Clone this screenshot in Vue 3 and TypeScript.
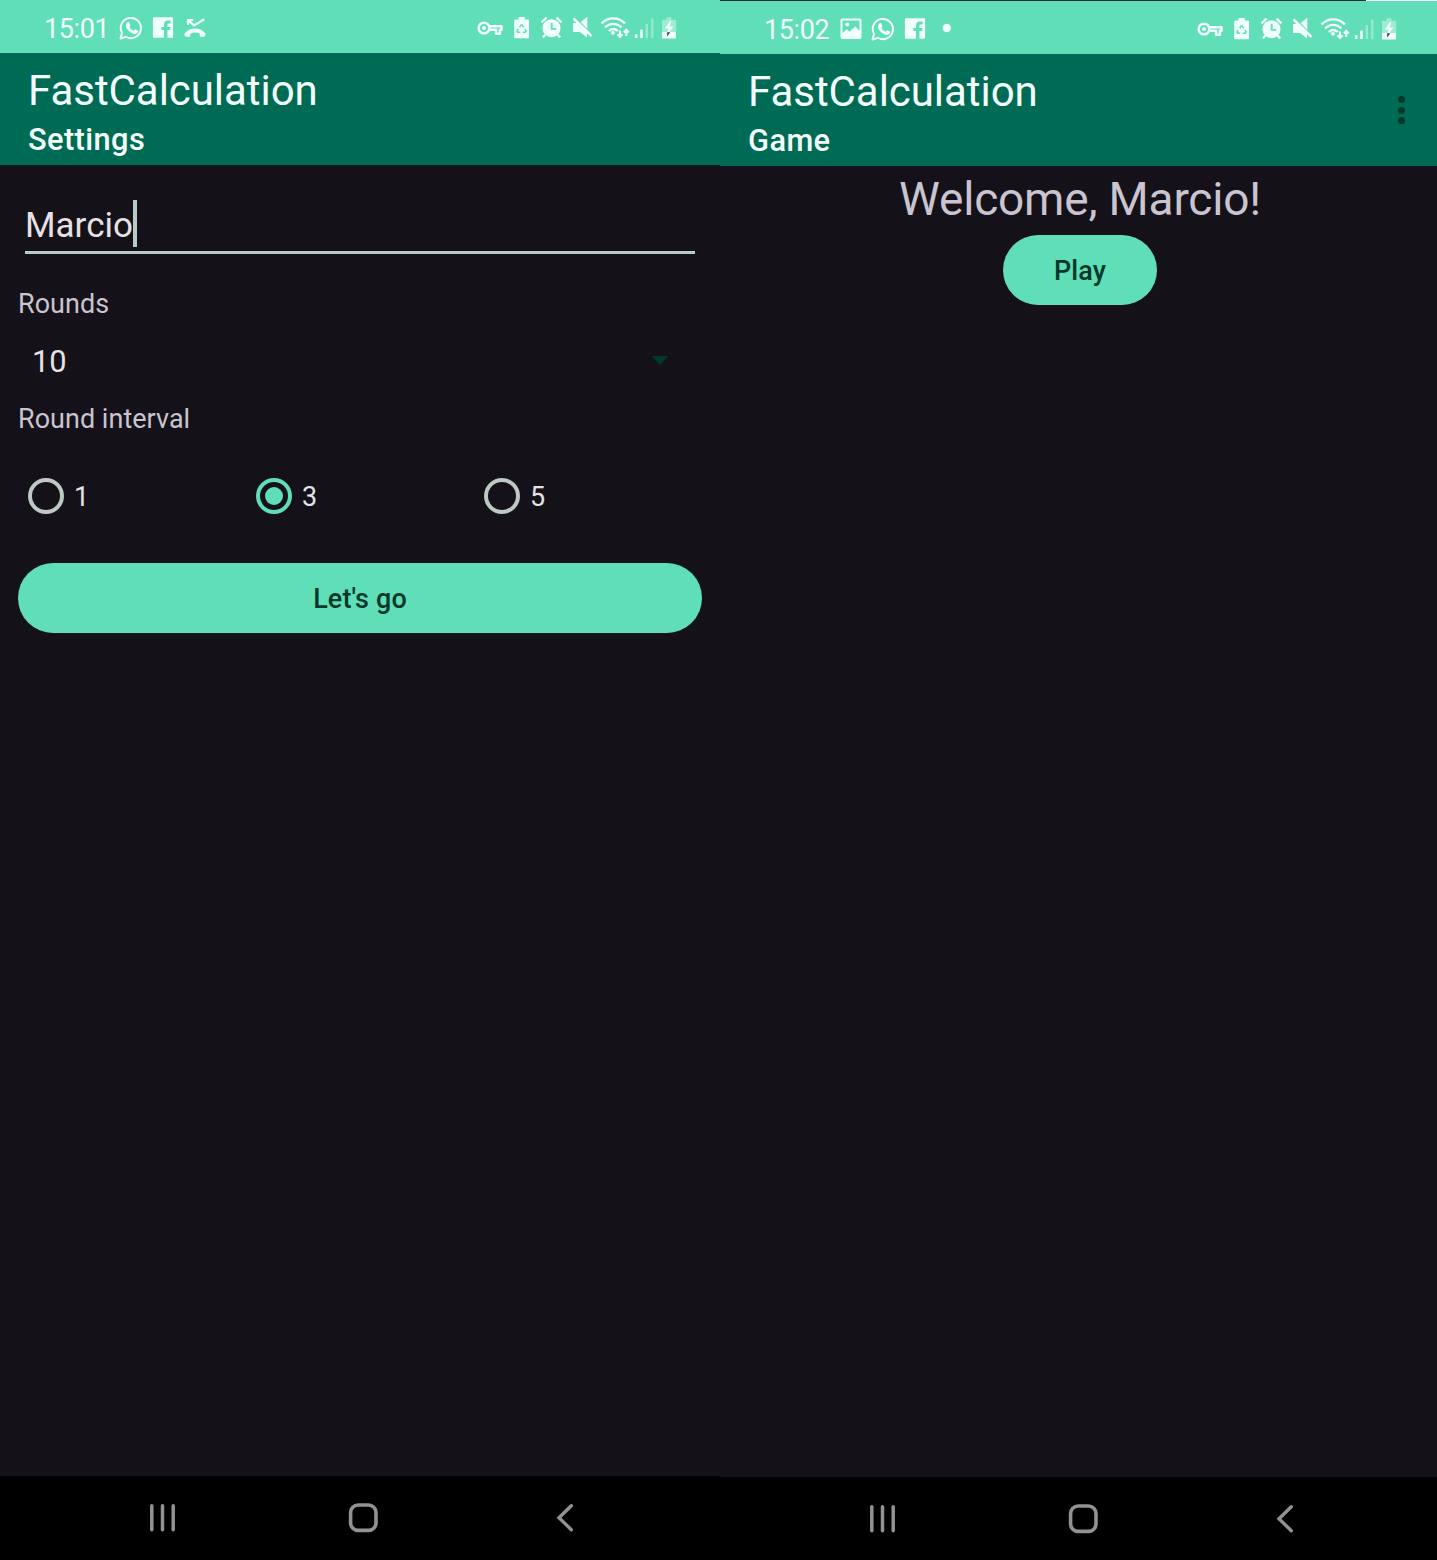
<script setup lang="ts">
interface Phone {
  id: string
  time: string
  subtitle: string
  notices: string[]
}

interface Glyph {
  id: string
  width: number
}

const phones: Phone[] = [
  { id: 'settings', time: '15:01', subtitle: 'Settings', notices: ['whatsapp', 'facebook', 'missed'] },
  { id: 'game', time: '15:02', subtitle: 'Game', notices: ['picture', 'whatsapp', 'facebook', 'dot'] },
]

const system: Glyph[] = [
  { id: 'key', width: 30 },
  { id: 'recycle', width: 32 },
  { id: 'alarm', width: 30 },
  { id: 'mute', width: 31 },
  { id: 'wifi', width: 34 },
  { id: 'signal', width: 24 },
  { id: 'battery', width: 26 },
]

const intervals: number[] = [1, 3, 5]
const selected = 3
const player = 'Marcio'
</script>

<template>
  <svg class="defs" width="0" height="0" aria-hidden="true">
    <symbol id="whatsapp" viewBox="0 0 32 28">
      <path d="M5.500 24.500 7 18.900A10.100 10.100 0 1 1 11 22.900Z" fill="none" stroke="currentColor" stroke-width="2" stroke-linejoin="round" />
      <path d="M12.400 8.400c.7-.7 1.600-.5 1.900.2l1 2.300c.2.500-.8 1.500-.9 1.900 1 2 2.400 3.200 4.400 4 .6-.4 1.200-1.700 1.800-1.400l2.200 1.100c.6.4.4 1.500-.1 2.100-1.500 1.700-3.500 1.500-5.500.6-3-1.300-5-3.500-6-6-.6-1.800-.3-3.500 1.200-4.800Z" fill="currentColor" />
    </symbol>
    <symbol id="facebook" viewBox="0 0 32 28">
      <path d="M6.800 3.200h18.400a.9.900 0 0 1 .9.900v18.700a.9.900 0 0 1-.9.900h-4.700v-7.700h2.600l.5-3h-3.100v-2c0-1.100.6-1.500 1.600-1.500h1.500V6.600H21c-2.600 0-4 1.500-4 4.100V13h-2.600v3H17v7.700H6.800a.9.900 0 0 1-.9-.9V4.100a.9.900 0 0 1 .9-.9Z" fill="currentColor" />
    </symbol>
    <symbol id="missed" viewBox="0 0 32 28">
      <path d="M9 11V6h5.200M9.400 6.400l5.600 5 10.300-6.200" fill="none" stroke="currentColor" stroke-width="2.200" />
      <path d="M5.400 20C7.700 16.300 12 14.500 16 14.500s8.300 1.800 10.600 5.500c.3.500.2 1-.2 1.300l-1.400 1.500h-4l-.5-3.300c-3-1.200-6-1.200-9 0l-.5 3.300h-4l-1.400-1.500c-.4-.3-.5-.8-.2-1.300Z" fill="currentColor" />
    </symbol>
    <symbol id="picture" viewBox="0 0 32 28">
      <path d="M7.500 4.500h17a1 1 0 0 1 1 1V22a1 1 0 0 1-1 1h-17a1 1 0 0 1-1-1V5.500a1 1 0 0 1 1-1Z" fill="none" stroke="currentColor" stroke-width="2" />
      <path d="M7 18.500l4.700-4.300 2.800 2.500 5.700-5.300 5 5v6.100H7Z" fill="currentColor" />
      <circle cx="12.300" cy="9.500" r="2" fill="currentColor" />
    </symbol>
    <symbol id="dot" viewBox="0 0 32 28">
      <circle cx="15.800" cy="13" r="4.200" fill="currentColor" />
    </symbol>

    <symbol id="key" viewBox="0 0 30 28">
      <circle cx="9" cy="14" r="5.300" fill="none" stroke="currentColor" stroke-width="2.600" />
      <circle cx="9" cy="14" r="2" fill="currentColor" />
      <path d="M13.500 12.200h13v3.500h-1.600v4h-3.800v-4h-7" fill="none" stroke="currentColor" stroke-width="2.500" stroke-linejoin="round" />
    </symbol>
    <symbol id="recycle" viewBox="0 0 32 28">
      <path d="M13.500 3h6.300v2.400H23a1 1 0 0 1 1 1v16.800a1 1 0 0 1-1 1H10.200a1 1 0 0 1-1-1V6.400a1 1 0 0 1 1-1h3.300Z" fill="currentColor" />
      <path d="M14.600 13.300l1.500-2.400h1l1.500 2.400M19.900 14.800l1.200 2.300-.8 1.200h-2.500M15.300 18.300h-2.500l-.7-1.200 1.200-2.300" fill="none" stroke="#60deb8" stroke-width="1.500" />
    </symbol>
    <symbol id="alarm" viewBox="0 0 30 28">
      <circle cx="14.500" cy="14.200" r="9" fill="currentColor" />
      <path d="M4.500 8.300l5-4.700M24.500 8.300l-5-4.700M8.500 20.500l-2.700 2.900M20.500 20.500l2.700 2.900" fill="none" stroke="currentColor" stroke-width="2.400" />
      <path d="M14.700 8.700v6.200h4.600" fill="none" stroke="#60deb8" stroke-width="1.900" />
    </symbol>
    <symbol id="mute" viewBox="0 0 31 28">
      <path d="M6 9h4.500L20 18.500v5l-7-5.500H6Z" fill="currentColor" />
      <path d="M13.700 8L20.300 2.700v12.200Z" fill="currentColor" />
      <path d="M6.500 4.500L24.500 22" stroke="currentColor" stroke-width="2.500" />
    </symbol>
    <symbol id="wifi" viewBox="0 0 34 28">
      <path d="M3.500 9.400c6.700-6.800 16.800-6.800 23.500 0M7 13.400c5-4.700 11.500-4.700 16.500 0M10.700 17c3-2.600 6.200-2.600 9.200 0" fill="none" stroke="currentColor" stroke-width="2.300" />
      <circle cx="15" cy="18.800" r="1.900" fill="currentColor" />
      <path d="M22 16.500v6M19.500 20.300l2.500 2.700 2.500-2.700M28.300 22v-6M25.800 18.500l2.500-2.700 2.500 2.700" fill="none" stroke="currentColor" stroke-width="2" />
    </symbol>
    <symbol id="signal" viewBox="0 0 24 28">
      <path d="M4.200 20.200V24M9.500 15.500V24" stroke="currentColor" stroke-width="2.600" />
      <path d="M14.800 10V24M20.300 4.500V24" stroke="currentColor" stroke-width="2.200" opacity=".4" />
    </symbol>
    <symbol id="battery" viewBox="0 0 26 28">
      <path d="M10.500 3.300h5v2.400h3.800a.8.800 0 0 1 .8.800V18H6V6.500a.8.800 0 0 1 .8-.8h3.700Z" fill="currentColor" opacity=".42" />
      <path d="M6 18h14v5.500a1 1 0 0 1-1 1H7a1 1 0 0 1-1-1Z" fill="currentColor" />
      <path d="M14 7l-5.200 7.500h3.500L11.300 18h2.300L17.300 12.500h-3.500l1.500-5.500Z" fill="currentColor" />
      <path d="M11.200 18.200h3l-3 4.300Z" fill="#26433c" />
    </symbol>
  </svg>

  <main class="board">
    <section v-for="phone in phones" :key="phone.id" class="phone" :class="phone.id">
      <div v-if="phone.id === 'game'" class="strip"></div>
      <div class="status">
        <span class="time">{{ phone.time }}</span>
        <div class="glyphs">
          <svg v-for="name in phone.notices" :key="name" width="32" height="28"><use :href="'#' + name" /></svg>
        </div>
        <div class="glyphs system">
          <svg v-for="g in system" :key="g.id" :width="g.width" height="28"><use :href="'#' + g.id" /></svg>
        </div>
      </div>

      <header class="appbar">
        <div class="titles">
          <h1>FastCalculation</h1>
          <h2>{{ phone.subtitle }}</h2>
        </div>
        <div v-if="phone.id === 'game'" class="menu"><i></i><i></i><i></i></div>
      </header>

      <div v-if="phone.id === 'settings'" class="content form">
        <div class="field"><span>{{ player }}</span><b class="caret"></b></div>
        <div class="label">Rounds</div>
        <div class="spinner">
          <span>10</span>
          <svg width="18" height="9" viewBox="0 0 18 9"><path d="M.5 0h17L9 8.800Z" fill="#00382a" /></svg>
        </div>
        <div class="label second">Round interval</div>
        <div class="radios">
          <div v-for="n in intervals" :key="n" class="radio" :class="{ on: n === selected }">
            <span class="ring"></span><span class="num">{{ n }}</span>
          </div>
        </div>
        <button class="btn wide">Let's go</button>
      </div>
      <div v-else class="content game-content">
        <div class="welcome">Welcome, {{ player }}!</div>
        <button class="btn play">Play</button>
      </div>

      <nav class="nav">
        <svg width="28" height="30" viewBox="0 0 28 30"><path d="M3.800 2.700v24M14.500 2.700v24M25.200 2.700v24" stroke="#929292" stroke-width="3.500" stroke-linecap="round" /></svg>
        <svg class="home" width="30" height="30" viewBox="0 0 30 30"><rect x="2.600" y="2" width="25.400" height="25.400" rx="7.500" fill="none" stroke="#929292" stroke-width="3.600" /></svg>
        <svg width="18" height="30" viewBox="0 0 18 30"><path d="M15.300 2.700L3 14.700l12.300 12" fill="none" stroke="#929292" stroke-width="3.400" stroke-linecap="round" /></svg>
      </nav>
    </section>
  </main>
</template>

<style>
body {
  margin: 0;
  background: #141218;
}
</style>

<style scoped>
.defs {
  position: absolute;
}
.board {
  display: flex;
  width: 1437px;
  height: 1560px;
  overflow: hidden;
  background: #141218;
  font-family: Roboto, "Liberation Sans", sans-serif;
}
.phone {
  display: flex;
  flex-direction: column;
  flex: 0 0 720px;
  height: 1560px;
}
.strip {
  flex: none;
  height: 1px;
  background: linear-gradient(to right, #302c35 646px, #fff 646px);
}
.status {
  display: flex;
  align-items: center;
  flex: none;
  box-sizing: border-box;
  height: 53px;
  padding: 3px 38px 0 44px;
  background: #60deb8;
  color: #f1fffa;
}
.time {
  width: 71px;
  padding-top: 2px;
  font-size: 27px;
  letter-spacing: -0.400px;
  line-height: 32px;
  white-space: nowrap;
}
.glyphs {
  display: flex;
}
.glyphs svg {
  display: block;
}
.system {
  margin-left: auto;
}
.appbar {
  display: flex;
  justify-content: space-between;
  flex: none;
  height: 112px;
  background: #006b54;
  color: #f4fffb;
}
.titles {
  padding-left: 28px;
}
h1,
h2 {
  margin: 0;
  white-space: nowrap;
}
h1 {
  padding-top: 13px;
  font-size: 42px;
  font-weight: 400;
  letter-spacing: -0.050px;
  line-height: 50px;
}
h2 {
  padding-top: 6px;
  font-size: 30.800px;
  font-weight: 500;
  letter-spacing: 0.400px;
  line-height: 36px;
}
.menu {
  display: flex;
  flex-direction: column;
  gap: 3.500px;
  margin: 42px 35.500px 0 0;
}
.menu i {
  width: 7px;
  height: 7px;
  border-radius: 50%;
  background: #00382a;
}
.content {
  display: flex;
  flex-direction: column;
  flex: 1;
}
.form {
  padding: 0 18px;
}
.field {
  display: flex;
  align-items: center;
  box-sizing: border-box;
  height: 54px;
  margin: 35px 7px 0;
  padding-bottom: 4px;
  border-bottom: 3px solid #b5ccc8;
  color: #e6e1e5;
  font-size: 35px;
}
.field span {
  padding-top: 4px;
}
.caret {
  width: 4px;
  height: 47px;
  background: #b5ccc8;
}
.label {
  height: 32px;
  margin-top: 34px;
  color: #cac4d0;
  font-size: 26.950px;
  letter-spacing: 0.050px;
  line-height: 32px;
}
.spinner {
  display: flex;
  align-items: center;
  justify-content: space-between;
  height: 36px;
  margin-top: 23px;
  padding: 0 33px 0 14px;
  color: #e6e1e5;
  font-size: 30.800px;
}
.label.second {
  margin-top: 24px;
}
.spinner svg {
  margin-bottom: 1px;
}
.radios {
  display: flex;
  height: 36px;
  margin: 43px 0 49px;
}
.radio {
  display: flex;
  align-items: center;
  flex: 1;
  padding-left: 10px;
  color: #e6e1e5;
  font-size: 26.950px;
}
.num {
  padding-top: 2px;
}
.ring {
  display: flex;
  align-items: center;
  justify-content: center;
  box-sizing: border-box;
  width: 36px;
  height: 36px;
  margin-right: 10px;
  border: 4px solid #bfc9c3;
  border-radius: 50%;
}
.on .ring {
  border-color: #60deb8;
}
.on .ring::after {
  width: 18px;
  height: 18px;
  border-radius: 50%;
  background: #60deb8;
  content: "";
}
.btn {
  height: 70px;
  padding: 2px 0 0;
  border: 0;
  border-radius: 35px;
  background: #60deb8;
  color: #00382a;
  font-family: inherit;
  font-size: 26.950px;
  font-weight: 500;
  letter-spacing: 0.150px;
}
.game-content {
  align-items: center;
}
.welcome {
  height: 54px;
  margin: 6px 0 9px;
  color: #cac4d0;
  font-size: 46px;
  letter-spacing: -0.180px;
  line-height: 54px;
}
.play {
  width: 154px;
}
.nav {
  display: flex;
  align-items: center;
  flex: none;
  box-sizing: border-box;
  height: 84px;
  padding: 0 146px 0 148px;
  justify-content: space-between;
  background: #000;
}
.home {
  margin-right: 6px;
}
.game .nav {
  height: 83px;
  padding-top: 1px;
}
</style>
